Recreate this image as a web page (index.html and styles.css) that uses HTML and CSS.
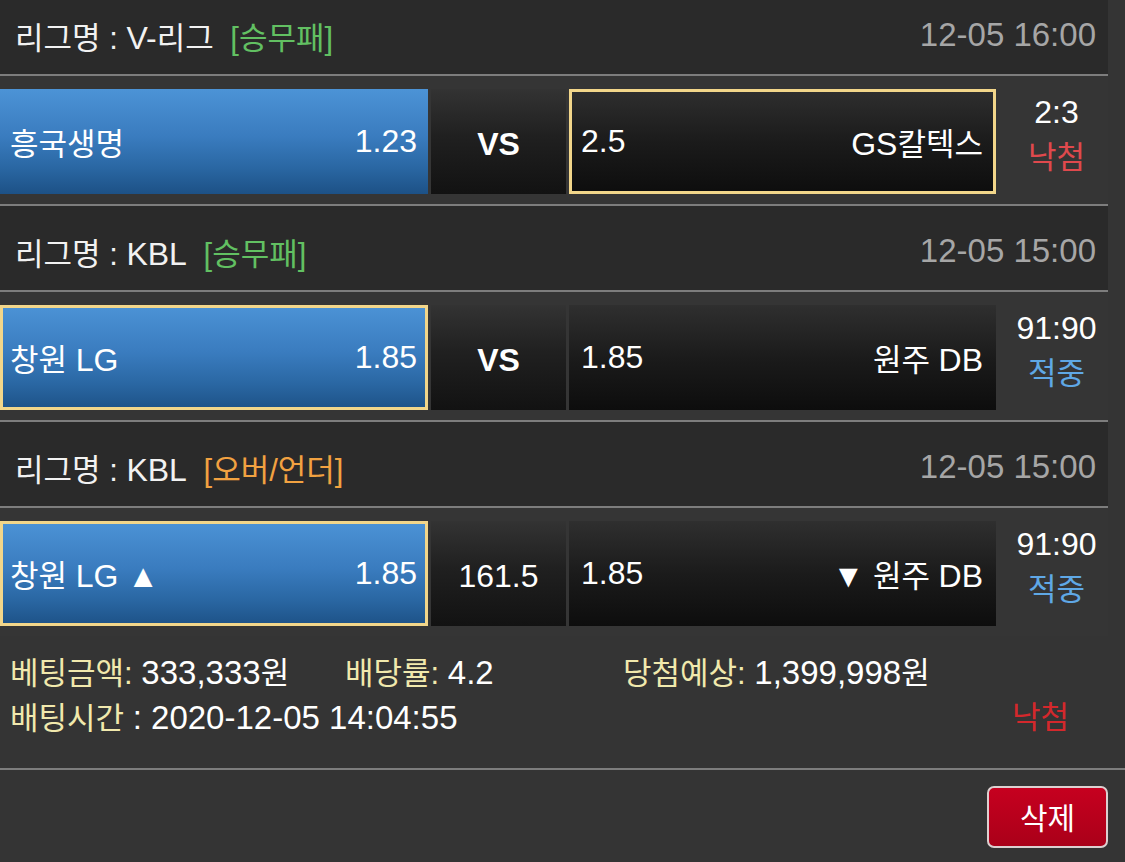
FILE: index.html
```html
<!DOCTYPE html>
<html lang="ko">
<head>
<meta charset="utf-8">
<title>베팅내역</title>
<link rel="stylesheet" href="styles.css">
</head>
<body>
<div class="slip">
  <div class="games">
    <section class="game">
      <div class="league">
        <div class="league-name">리그명 : <span class="en">V-</span>리그 <span class="type type-win">[승무패]</span></div>
        <div class="league-time">12-05 16:00</div>
      </div>
      <div class="match">
        <div class="pick pick-home"><span class="team">흥국생명</span><span class="odd">1.23</span></div>
        <div class="pick pick-mid"><span class="vs">VS</span></div>
        <div class="pick pick-away selected"><span class="odd">2.5</span><span class="team"><span class="en">GS</span>칼텍스</span></div>
        <div class="result"><span class="score">2:3</span><span class="status status-lose">낙첨</span></div>
      </div>
    </section>
    <section class="game">
      <div class="league">
        <div class="league-name">리그명 : <span class="en">KBL</span> <span class="type type-win">[승무패]</span></div>
        <div class="league-time">12-05 15:00</div>
      </div>
      <div class="match">
        <div class="pick pick-home selected"><span class="team">창원 <span class="en">LG</span></span><span class="odd">1.85</span></div>
        <div class="pick pick-mid"><span class="vs">VS</span></div>
        <div class="pick pick-away"><span class="odd">1.85</span><span class="team">원주 <span class="en">DB</span></span></div>
        <div class="result"><span class="score">91:90</span><span class="status status-win">적중</span></div>
      </div>
    </section>
    <section class="game">
      <div class="league">
        <div class="league-name">리그명 : <span class="en">KBL</span> <span class="type type-ou">[오버/언더]</span></div>
        <div class="league-time">12-05 15:00</div>
      </div>
      <div class="match">
        <div class="pick pick-home selected"><span class="team">창원 <span class="en">LG ▲</span></span><span class="odd">1.85</span></div>
        <div class="pick pick-mid"><span class="line">161.5</span></div>
        <div class="pick pick-away"><span class="odd">1.85</span><span class="team"><span class="en">▼</span> 원주 <span class="en">DB</span></span></div>
        <div class="result"><span class="score">91:90</span><span class="status status-win">적중</span></div>
      </div>
    </section>
  </div>
  <div class="info">
    <div class="info-row info-row-top">
      <span class="item"><span class="label">베팅금액:</span> <span class="num">333,333</span>원</span>
      <span class="item"><span class="label">배당률:</span> <span class="num">4.2</span></span>
      <span class="item"><span class="label">당첨예상:</span> <span class="num">1,399,998</span>원</span>
    </div>
    <div class="info-row info-row-bottom">
      <span class="item"><span class="label">배팅시간</span> <span class="num">: 2020-12-05 14:04:55</span></span>
      <span class="final">낙첨</span>
    </div>
  </div>
  <div class="actions">
    <button class="btn-delete" type="button">삭제</button>
  </div>
</div>
</body>
</html>
```

FILE: styles.css
```css
* {
  box-sizing: border-box;
}

html,
body {
  margin: 0;
  padding: 0;
}

body {
  width: 1125px;
  height: 862px;
  overflow: hidden;
  background: #343434;
  color: #ffffff;
  font-family: "Liberation Sans", "Noto Sans CJK KR", sans-serif;
  font-size: 31px;
}

.en {
  font-size: 32px;
}

.num {
  font-size: 33px;
}

.games {
  width: 1108px;
  margin-top: -10px;
}

.league {
  height: 86px;
  padding: 6px 11px 0 15px;
  display: flex;
  align-items: center;
  justify-content: space-between;
  background: #2a2a2a;
  border-bottom: 2px solid #7d7d7d;
  white-space: nowrap;
}

.league-name {
  color: #f2f2f2;
}

.type {
  margin-left: 8px;
}

.type-win {
  color: #62c062;
}

.type-ou {
  color: #f2a241;
}

.league-time {
  color: #a6a6a6;
  font-size: 33px;
  padding-right: 1px;
}

.match {
  height: 130px;
  padding: 13px 0 11px;
  display: grid;
  grid-template-columns: 428px 135px 427px 1fr;
  column-gap: 3px;
  background: #353535;
  border-bottom: 2px solid #7d7d7d;
}

.game:last-child .match {
  height: 128px;
  border-bottom: none;
}

.pick {
  display: flex;
  align-items: center;
  justify-content: space-between;
  border: 3px solid transparent;
  background-origin: border-box;
  white-space: nowrap;
}

.pick-home {
  padding: 0 8px 0 7px;
  background-image: linear-gradient(#4c93d6 0%, #3a7cbf 45%, #2a67a3 75%, #1d5186 100%);
}

.pick-mid {
  justify-content: center;
  background-image: linear-gradient(#333333 0%, #202020 45%, #121212 100%);
}

.pick-away {
  padding: 0 10px 0 9px;
  background-image: linear-gradient(#2f2f2f 0%, #1b1b1b 50%, #0d0d0d 100%);
}

.selected {
  border-color: #f2d68a;
}

.odd {
  font-size: 32px;
}

.vs {
  font-size: 32px;
  font-weight: bold;
  padding-top: 5px;
}

.line {
  font-size: 32px;
  padding-top: 6px;
}

.result {
  display: flex;
  flex-direction: column;
  align-items: center;
  justify-content: center;
  padding: 0 0 13px 6px;
  line-height: 46px;
}

.score {
  font-size: 32px;
}

.status-lose {
  color: #e0494d;
}

.status-win {
  color: #5fa8e6;
}

.info {
  height: 134px;
  padding: 14px 56px 0 10px;
  border-bottom: 2px solid #7d7d7d;
  line-height: 45px;
}

.info-row {
  height: 45px;
  white-space: nowrap;
}

.info-row-top {
  display: grid;
  grid-template-columns: 335px 278px 1fr;
}

.info-row-bottom {
  display: flex;
  justify-content: space-between;
}

.label {
  color: #f1e9ad;
}

.final {
  color: #d4282c;
}

.actions {
  display: flex;
  justify-content: flex-end;
  padding: 16px 17px 0 0;
}

.btn-delete {
  width: 121px;
  height: 62px;
  padding: 0 0 2px;
  border: 2px solid #dcd0d0;
  border-radius: 7px;
  background: linear-gradient(#c6001f, #aa0019);
  color: #ffffff;
  font-family: "Liberation Sans", "Noto Sans CJK KR", sans-serif;
  font-size: 30px;
}
```
